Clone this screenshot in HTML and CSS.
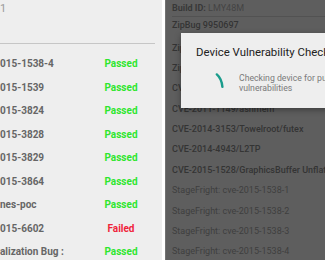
FILE: index.html
```html
<!DOCTYPE html>
<html lang="en">
<head>
  <meta charset="UTF-8">
  <meta name="viewport" content="width=device-width, initial-scale=1.0">
  <title>Device Vulnerability Check - Screens</title>
  <link rel="stylesheet" href="styles.css">
</head>
<body>
  <div class="shots">
    <!-- left screen: results list, scrolled -->
    <section class="screen screen-left">
      <div class="top-bar"><span class="frag">1</span></div>
      <ul class="results">
        <li class="result"><span class="name">015-1538-4</span><span class="status ok">Passed</span></li>
        <li class="result"><span class="name">015-1539</span><span class="status ok">Passed</span></li>
        <li class="result"><span class="name">015-3824</span><span class="status ok">Passed</span></li>
        <li class="result"><span class="name">015-3828</span><span class="status ok">Passed</span></li>
        <li class="result"><span class="name">015-3829</span><span class="status ok">Passed</span></li>
        <li class="result"><span class="name">015-3864</span><span class="status ok">Passed</span></li>
        <li class="result"><span class="name">nes-poc</span><span class="status ok">Passed</span></li>
        <li class="result"><span class="name">015-6602</span><span class="status bad">Failed</span></li>
        <li class="result"><span class="name">alization Bug :</span><span class="status ok">Passed</span></li>
      </ul>
    </section>

    <!-- right screen: scan in progress -->
    <section class="screen screen-right">
      <ul class="checks">
        <li class="check build"><b>Build ID:</b> LMY48M</li>
        <li class="check zip">ZipBug 9950697</li>
        <li class="check">ZipBug 9695860</li>
        <li class="check">ZipBug 8219321</li>
        <li class="check">CVE-2012-6422</li>
        <li class="check">CVE-2011-1149/ashmem</li>
        <li class="check">CVE-2014-3153/Towelroot/futex</li>
        <li class="check">CVE-2014-4943/L2TP</li>
        <li class="check">CVE-2015-1528/GraphicsBuffer Unflatten</li>
        <li class="check light">StageFright: cve-2015-1538-1</li>
        <li class="check light">StageFright: cve-2015-1538-2</li>
        <li class="check light">StageFright: cve-2015-1538-3</li>
        <li class="check light">StageFright: cve-2015-1538-4</li>
      </ul>

      <div class="dialog">
        <h2 class="dialog-title">Device Vulnerability Check</h2>
        <div class="dialog-body">
          <svg class="spinner" width="20" height="20" viewBox="0 0 20 20">
            <path d="M7.8 3.4 Q12.6 7.5 13.4 15.8" fill="none" stroke="#1a9c8c" stroke-width="2.4" stroke-linecap="round"/>
          </svg>
          <p class="dialog-text">Checking device for publicly known<br>vulnerabilities</p>
        </div>
      </div>
    </section>
  </div>
</body>
</html>
```

FILE: styles.css
```css
body {
  margin: 0;
  width: 325px;
  height: 260px;
  overflow: hidden;
  background-color: #ffffff;
  font-family: Roboto, "Liberation Sans", sans-serif;
}
ul {
  list-style: none;
  margin: 0;
  padding: 0;
}
.shots {
  display: flex;
  gap: 3px;
  height: 260px;
}
.screen {
  height: 260px;
  overflow: hidden;
}

/* left screen */
.screen-left {
  width: 162px;
  flex: none;
  background-color: #eeeeee;
}
.top-bar {
  width: 155px;
  height: 43px;
  border-bottom: 1px solid #c6c6c6;
}
.frag {
  display: block;
  padding-top: 2px;
  font-size: 11px;
  line-height: 13px;
  color: #9a9a9a;
}
.results {
  padding-top: 8px;
}
.result {
  display: grid;
  grid-template-columns: 98px 46px;
  align-items: center;
  height: 23.5px;
  font-size: 10px;
  font-weight: 700;
}
.name {
  color: #666666;
  white-space: nowrap;
  overflow: hidden;
}
.status {
  text-align: center;
}
.ok {
  color: #2ee62e;
}
.bad {
  color: #f0243a;
}

/* right screen, dimmed by the dialog */
.screen-right {
  flex: 1;
  position: relative;
  background-color: #5e5e5e;
  border-left: 1px solid #727272;
}
.check {
  height: 20.4px;
  line-height: 20.4px;
  padding-left: 6px;
  font-size: 9px;
  font-weight: 500;
  color: #343434;
  white-space: nowrap;
}
.check.build {
  height: 16px;
  line-height: 16px;
  margin-left: 6px;
  padding-left: 0;
  border-bottom: 1px solid #525252;
  font-weight: 400;
  color: #444444;
}
.check.build b {
  font-weight: 700;
  color: #383838;
}
.check.zip {
  height: 20.5px;
  line-height: 16px;
}
.check.light {
  font-weight: 400;
  color: #3e3e3e;
}

.dialog {
  position: absolute;
  left: 15px;
  top: 33px;
  right: -30px;
  height: 75px;
  background-color: #eeeeee;
  box-shadow: 0 2px 6px rgba(0,0,0,0.35);
}
.dialog-title {
  margin: 0;
  padding: 12px 0 0 15px;
  font-size: 11.4px;
  line-height: 14px;
  font-weight: 400;
  color: #222222;
  white-space: nowrap;
}
.dialog-body {
  display: flex;
  align-items: flex-start;
  gap: 10px;
  margin-top: 15px;
  padding-left: 28px;
}
.spinner {
  flex: none;
  margin-top: -3px;
}
.dialog-text {
  margin: 0;
  font-size: 8.7px;
  line-height: 9.5px;
  color: #7a7a7a;
  white-space: nowrap;
}
```
